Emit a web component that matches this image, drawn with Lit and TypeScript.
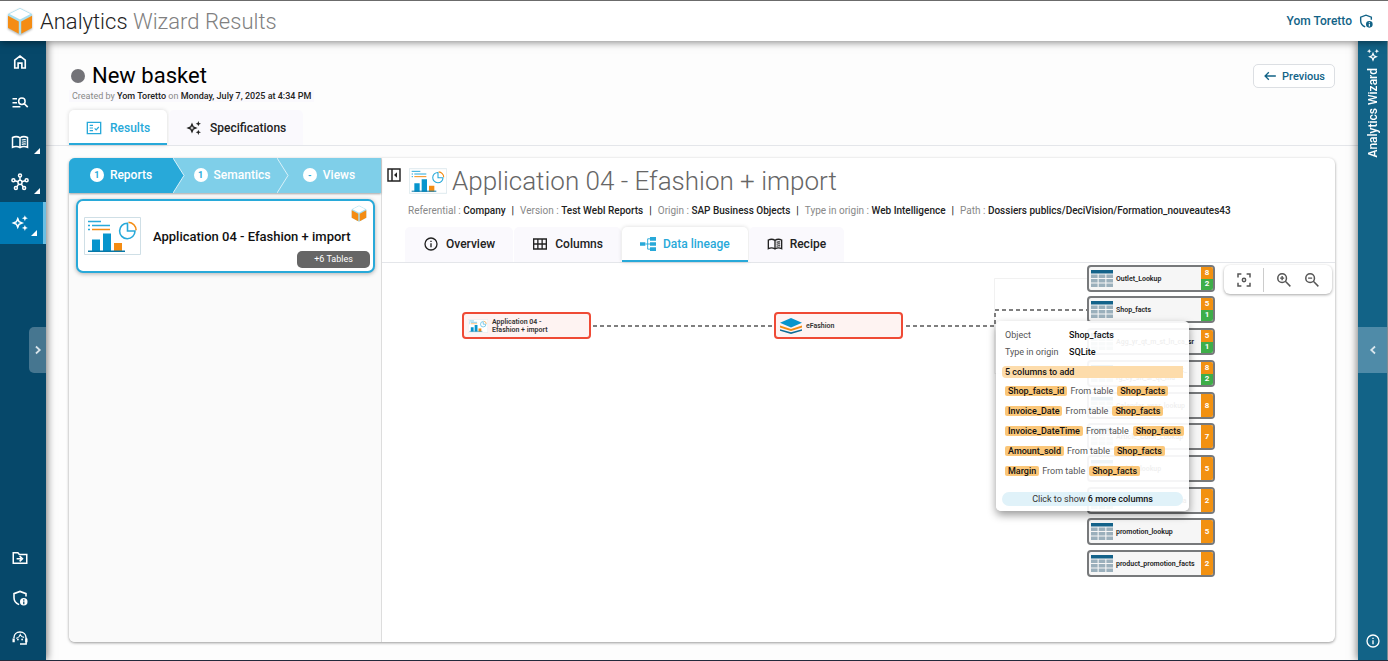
import { LitElement, html, svg, css, nothing } from "lit";
import { customElement, state } from "lit/decorators.js";
import { classMap } from "lit/directives/class-map.js";
import { styleMap } from "lit/directives/style-map.js";

const sparkle = svg`<path d="M9 6.2 10.7 10.3 14.8 12 10.7 13.7 9 17.8 7.3 13.7 3.2 12 7.3 10.3Z" fill="none" stroke="currentColor" stroke-width="2" stroke-linejoin="miter"/><path d="M18.5 1.5 19.6 4.4 22.5 5.5 19.6 6.6 18.5 9.5 17.4 6.6 14.5 5.5 17.4 4.4ZM18.5 14.5 19.6 17.4 22.5 18.5 19.6 19.6 18.5 22.5 17.4 19.6 14.5 18.5 17.4 17.4Z" fill="currentColor"/>`;
const book = svg`<path d="M12 6.5C9.5 4.8 5 4.6 2 6v13c3-1.300 7.500-1.100 10 .6 2.500-1.700 7-1.900 10-.6V6c-3-1.400-7.500-1.200-10 .5v13" fill="none" stroke="currentColor" stroke-width="2"/><path d="M14.300 9.400c1.900-.7 3.700-.8 5.500-.4M14.300 12.300c1.900-.7 3.700-.8 5.500-.4M14.300 15.200c1.900-.7 3.700-.8 5.500-.4" fill="none" stroke="currentColor" stroke-width="1.600"/>`;
const shield = svg`<path d="M20 10V6.200L12 3.200 4 6.200V11.500c0 4.300 2.800 7.600 6.800 9.300" fill="none" stroke="currentColor" stroke-width="2.100"/><path fill-rule="evenodd" d="M17 12a5 5 0 1 0 0 10 5 5 0 0 0 0-10Zm-.8 1.800h1.700v1.700h-1.700ZM16.200 16.500h1.700v3.700h-1.700Z" fill="currentColor"/>`;
const info = svg`<circle cx="12" cy="12" r="9" fill="none" stroke="currentColor" stroke-width="2"/><path d="M11 7h2v2h-2zM11 11h2v6h-2z" fill="currentColor"/>`;

const ICONS: Record<string, unknown> = {
  home: svg`<path d="M5 20V9.500L12 4.200l7 5.300V20h-4.500v-6.500h-5V20Z" fill="none" stroke="currentColor" stroke-width="2.200"/>`,
  search: svg`<path d="M2 7.800h6M2 13h6M2 18.200h10.500" stroke="currentColor" stroke-width="2"/><circle cx="14.500" cy="11" r="4.300" fill="none" stroke="currentColor" stroke-width="2"/><path d="m17.500 14 4.800 4.800" stroke="currentColor" stroke-width="2.200"/>`,
  book,
  hub: svg`<g fill="none" stroke="currentColor" stroke-width="2"><circle cx="12" cy="12.500" r="2.700"/><circle cx="12" cy="3.300" r="2"/><circle cx="3.200" cy="9.800" r="2"/><circle cx="20.800" cy="9.800" r="2"/><circle cx="6.500" cy="20" r="2"/><circle cx="17.500" cy="20" r="2"/><path d="M12 5.300v4.500M5.200 10.400l4.200 1.300M18.800 10.400l-4.200 1.300M7.700 18.300l2.600-3.500M16.300 18.300l-2.600-3.500"/></g>`,
  sparkle,
  folder: svg`<path d="M3 5h6.200l2 2.300H21V19H3Z" fill="none" stroke="currentColor" stroke-width="2"/><path d="M7.500 13h6M11.500 9.500l3.700 3.500-3.700 3.500" fill="none" stroke="currentColor" stroke-width="2.200"/>`,
  shield,
  agent: svg`<path d="M3.800 12.200C3.800 7.300 7.400 4 12 4s8.200 3.300 8.200 8.200V20H12" fill="none" stroke="currentColor" stroke-width="2"/><path d="M2 12.500h3v5H2zM19 12.500h3v5h-3z" fill="currentColor"/><path d="M7 12.500c3-.8 4.600-2.500 5.300-5 1 2.200 2.800 3.400 5.200 3.700" fill="none" stroke="currentColor" stroke-width="1.500"/><circle cx="9.200" cy="14" r="1.200" fill="currentColor"/><circle cx="14.800" cy="14" r="1.200" fill="currentColor"/>`,
  check: svg`<path d="M2 3.500h20v17H2Z" fill="none" stroke="currentColor" stroke-width="2"/><path d="M5.500 8.200h5M5.500 12h5M5.500 15.800h5M13 12.500l2.200 2.200 4-4.200" fill="none" stroke="currentColor" stroke-width="1.800"/>`,
  back: svg`<path d="M22 12H3.500M10 5.500 3.500 12l6.500 6.500" fill="none" stroke="currentColor" stroke-width="2.200"/>`,
  dock: svg`<path d="M3 3h18v18H3ZM9 3v18" fill="none" stroke="currentColor" stroke-width="2.200"/><path d="m16.500 8-4.500 4 4.500 4z" fill="currentColor"/>`,
  info,
  grid: svg`<path d="M2.500 4.500h19v15h-19ZM2.500 12h19M8.800 4.500v15M15.200 4.500v15" fill="none" stroke="currentColor" stroke-width="2"/>`,
  tree: svg`<path d="M0 9.500h8v5H0zM15 1.500h9v5.500h-9zM15 9.300h9v5.500h-9zM15 17h9v5.500h-9z" fill="currentColor"/><path d="M8 12h7M16 4.200h-4.500v15.500H16" fill="none" stroke="currentColor" stroke-width="1.400"/>`,
  focus: svg`<path d="M4 8.500V4h4.500M15.500 4H20v4.500M20 15.500V20h-4.500M8.500 20H4v-4.500" fill="none" stroke="currentColor" stroke-width="2"/><circle cx="12" cy="12" r="2.200" fill="none" stroke="currentColor" stroke-width="2"/>`,
  zoomin: svg`<circle cx="9.500" cy="9.500" r="5.800" fill="none" stroke="currentColor" stroke-width="2"/><path d="m13.800 13.800 6.700 6.700M9.500 6.800v5.400M6.800 9.500h5.400" stroke="currentColor" stroke-width="1.900"/>`,
  zoomout: svg`<circle cx="9.500" cy="9.500" r="5.800" fill="none" stroke="currentColor" stroke-width="2"/><path d="m13.800 13.800 6.700 6.700M6.800 9.500h5.400" stroke="currentColor" stroke-width="1.900"/>`,
  right: svg`<path d="m8.500 6 6.500 6-6.500 6" fill="none" stroke="currentColor" stroke-width="3"/>`,
  left: svg`<path d="m15.500 6-6.500 6 6.500 6" fill="none" stroke="currentColor" stroke-width="3"/>`,
};

const icon = (name: string, cls = "i16") =>
  html`<svg class="icon ${cls}" viewBox="0 0 24 24" aria-hidden="true">${ICONS[name]}</svg>`;

const cube = (cls: string) => html`<svg class=${cls} viewBox="0 0 26 28" aria-hidden="true">
  <path d="M13 1 25 7v14L13 27.500 1 21V7Z" fill="#a9dff0"/>
  <path d="M13 1.800 23.500 7 13 12.600 2.500 7Z" fill="#fff"/>
  <path d="M1 8.800 11.800 14.600V26.800L1 21ZM25 8.800 14.200 14.600V26.800L25 21Z" fill="#f48c13"/>
</svg>`;

const reportArt = (cls: string) => html`<svg class=${cls} viewBox="0 0 57 38" aria-hidden="true">
  <path d="M.5.500h56v37H.5Z" fill="#fff" stroke="#cfdfe6"/>
  <path d="M4 4.500h13M8 8.500h18" stroke="#28a9d9" stroke-width="1.500"/>
  <path d="M4 8.500h2M4 12.500h2" stroke="#28a9d9" stroke-width="1.500"/>
  <path d="M8 12.500h18" stroke="#f48c13" stroke-width="1.500"/>
  <path d="M8 22.500h8V35H8ZM19 16.500h8V35h-8Z" fill="#0795cd"/>
  <path d="M30 26h8v9h-8Z" fill="#f48c13"/>
  <path d="M4 34.300h37" stroke="#0878a8" stroke-width="1.500"/>
  <path d="M43.500 14h7.500a7.700 7.700 0 1 1-7.500-7.700Z" fill="none" stroke="#28a9d9" stroke-width="1.600"/>
  <path d="M44.500 5.300a8 8 0 0 1 7.600 8" fill="none" stroke="#f48c13" stroke-width="1.600"/>
</svg>`;

const tableArt = html`<svg class="table-art" viewBox="0 0 22 18" aria-hidden="true">
  <path d="M0 0h22v3.500H0Z" fill="#14638a"/>
  <path d="M0 4.500h6.600v3.500H0zM7.700 4.500h6.600v3.500H7.700zM15.400 4.500H22v3.500h-6.600zM0 9h6.600v3.500H0zM7.700 9h6.600v3.500H7.700zM15.400 9H22v3.500h-6.600zM0 13.500h6.600V17H0zM7.700 13.500h6.600V17H7.700zM15.400 13.500H22V17h-6.600z" fill="#9bb0bc"/>
</svg>`;

const layersArt = html`<svg class="layers-art" viewBox="0 0 22 16" aria-hidden="true">
  <path d="M0 11.300 11 14.300 22 11.300V12.700L11 16 0 12.700Z" fill="#0d6d98"/>
  <path d="M0 7.600 11 11l11-3.400v1.900L11 13 0 9.500Z" fill="#f48c13"/>
  <path d="M11 0 22 4.800 11 9.600 0 4.800Z" fill="#0795cd"/>
</svg>`;

interface TableNode { name: string; top: number; add: number; ok?: number }
const TABLES: TableNode[] = [
  { name: "Outlet_Lookup", top: 2, add: 8, ok: 2 },
  { name: "Shop_facts", top: 33, add: 5, ok: 1 },
  { name: "Agg_yr_qt_m_st_ln_ca_sr", top: 65, add: 5, ok: 1 },
  { name: "Agg_yr_qt_mt_mn_wk_\u200brg_cy_sn_sr_qt_ma", top: 97, add: 8, ok: 2 },
  { name: "Calendar_year_lookup", top: 129, add: 8 },
  { name: "Article_Color_Lookup", top: 160, add: 7 },
  { name: "Article_lookup", top: 192, add: 5 },
  { name: "Article_lookup_criteria", top: 224, add: 2 },
  { name: "promotion_lookup", top: 255, add: 5 },
  { name: "product_promotion_facts", top: 287, add: 2 },
];

const base = css`
  * { box-sizing: border-box; }
  button, a { font: inherit; color: inherit; text-decoration: none; }
  button { border: 0; background: none; padding: 0; margin: 0; cursor: pointer; }
  .icon { display: block; flex: none; }
  .i14 { width: 14px; height: 14px; }
  .i16 { width: 16px; height: 16px; }
  .i18 { width: 18px; height: 18px; }
`;

@customElement("side-nav")
class SideNav extends LitElement {
  static styles = [base, css`
    :host { display: flex; flex-direction: column; justify-content: space-between; padding: 1px 0 2px; position: relative; background: #06486a; color: #fff; box-shadow: 1px 0 8px rgba(0, 0, 0, .55); }
    nav { display: flex; flex-direction: column; }
    .item { display: flex; align-items: center; justify-content: center; height: 40px; padding-right: 6px; position: relative; }
    .sub::after { content: ""; position: absolute; right: 6px; bottom: 8px; border: 3px solid transparent; border-right-color: #fff; border-bottom-color: #fff; }
    .active { height: 42px; background: #0079b3; border-right: 3px solid #6bbfe4; padding-right: 3px; }
    .handle { position: absolute; right: 0; top: 286px; width: 17px; height: 46px; border-radius: 5px 0 0 5px; background: #467690; color: #d9e4ea; display: flex; align-items: center; justify-content: center; }
  `];
  render() {
    const top: [string, string, boolean][] = [["home", "Home", false], ["search", "Search", false], ["book", "Catalog", true], ["hub", "Network", true], ["sparkle", "Wizard", true]];
    const bottom: [string, string][] = [["folder", "Import"], ["shield", "Privacy"], ["agent", "Support"]];
    return html`
      <nav>${top.map(([n, l, sub], i) => html`<a href="#" aria-label=${l} class=${classMap({ item: true, sub, active: i === 4 })}>${icon(n, "i18")}</a>`)}</nav>
      <nav>${bottom.map(([n, l]) => html`<a href="#" aria-label=${l} class="item">${icon(n, "i18")}</a>`)}</nav>
      <button class="handle" aria-label="Expand menu">${icon("right", "i14")}</button>`;
  }
}

@customElement("wizard-rail")
class WizardRail extends LitElement {
  static styles = [base, css`
    :host { display: flex; flex-direction: column; align-items: center; justify-content: space-between; padding: 7px 0 11px; position: relative; background: #126387; color: #fff; box-shadow: -1px 0 8px rgba(0, 0, 0, .5); border-right: 1px solid #7f8b92; }
    .open { display: flex; flex-direction: column; align-items: center; gap: 6px; }
    .label { writing-mode: vertical-rl; transform: rotate(180deg); font-size: 12px; line-height: 14px; font-weight: 500; }
    .turn { transform: rotate(-90deg); }
    .handle { position: absolute; left: 0; right: 0; top: 286px; height: 46px; background: #4f8ba8; color: #d9e6ed; display: flex; align-items: center; justify-content: center; }
  `];
  render() {
    return html`
      <button class="open">${icon("sparkle", "i14 turn")}<span class="label">Analytics Wizard</span></button>
      <button class="handle" aria-label="Expand panel">${icon("left", "i14")}</button>
      <button aria-label="Information">${icon("info", "i16")}</button>`;
  }
}

@customElement("lineage-graph")
class LineageGraph extends LitElement {
  static styles = [base, css`
    :host { display: block; position: relative; flex: 1; min-height: 0; overflow: hidden; }
    .edges { position: absolute; left: 0; top: 0; width: 100%; height: 100%; }
    .node { position: absolute; display: flex; align-items: center; width: 129px; height: 27px; padding: 0 4px; gap: 4px; border: 2px solid #ef4a35; border-radius: 4px; background: #fef3f2; font-size: 7px; line-height: 8px; font-weight: 600; color: #333; }
    .node .text { width: 74px; text-align: left; }
    .table { left: 705px; width: 128px; padding: 0 0 0 2px; border-color: #77797b; background: #f6f6f6; overflow: hidden; gap: 3px; }
    .table .text { flex: 1; width: auto; min-width: 0; color: #222; }
    .counts { align-self: stretch; width: 12px; display: flex; flex-direction: column; color: #fff; font-size: 8px; font-weight: 700; }
    .add, .ok { flex: 1; display: grid; place-items: center; background: #f29111; }
    .ok { background: #3eae49; }
    .mini { width: 20px; height: 14px; flex: none; }
    .table-art { width: 22px; height: 18px; flex: none; }
    .layers-art { width: 22px; height: 16px; flex: none; }
    .tools { position: absolute; right: 3px; top: 2px; height: 29px; width: 108px; display: flex; align-items: center; justify-content: space-between; padding: 0 11px; border-radius: 6px; background: #fff; color: #555; box-shadow: 0 1px 3px rgba(0, 0, 0, .35); }
    .rule { width: 1px; height: 24px; background: #ccc; }
    .tip { position: absolute; left: 614px; top: 58px; width: 193px; padding: 7px 6px 5px; border-radius: 5px; background: rgba(255, 255, 255, .93); box-shadow: 0 4px 8px rgba(0, 0, 0, .4); font-size: 9px; line-height: 14px; color: #555; }
    dl { margin: 0 0 7px; padding: 0 3px; display: grid; grid-template-columns: 64px 1fr; row-gap: 3px; line-height: 14px; }
    dd { margin: 0; font-weight: 500; color: #111; }
    .head { padding: 0 3px; height: 12px; line-height: 12px; border-radius: 4px 0 0 4px; background: #fddcab; color: #111; font-weight: 500; }
    ul { list-style: none; margin: 7px 0 15px; padding: 0 3px; display: flex; flex-direction: column; gap: 8px; }
    li { display: flex; gap: 3px; line-height: 12px; white-space: nowrap; }
    .tag { height: 10px; margin-top: 1px; line-height: 10px; padding: 0 3px; border-radius: 2px; background: #fbc779; color: #111; font-weight: 500; }
    .src { padding-right: 1px; }
    .more { display: block; width: 100%; height: 14px; border-radius: 7px; background: #e0f2f9; color: #333; text-align: center; }
    .more b { font-weight: 500; color: #111; }
  `];
  render() {
    const cols = ["Shop_facts_id", "Invoice_Date", "Invoice_DateTime", "Amount_sold", "Margin"];
    return html`
      <svg class="edges" aria-hidden="true">
        <path d="M612.500 94V15.500H705M612.500 63V110.500H705" fill="none" stroke="#f1f1f1"/>
        <path d="M211 63H393M524 63H613V47H705" fill="none" stroke="#555" stroke-width="1.500" stroke-dasharray="4 3"/>
      </svg>
      <button class="node" style=${styleMap({ left: "80px", top: "49px" })}>${reportArt("mini")}<span class="text">Application 04 - Efashion + import</span></button>
      <button class="node" style=${styleMap({ left: "392px", top: "49px" })}>${layersArt}<span class="text">eFashion</span></button>
      ${TABLES.map((t) => html`<div class="node table" style=${styleMap({ top: t.top + "px" })}>${tableArt}<span class="text">${t.name}</span><span class="counts"><span class="add">${t.add}</span>${t.ok ? html`<span class="ok">${t.ok}</span>` : nothing}</span></div>`)}
      <div class="tools">
        <button aria-label="Fit to screen">${icon("focus", "i18")}</button><span class="rule"></span>
        <button aria-label="Zoom in">${icon("zoomin", "i18")}</button><button aria-label="Zoom out">${icon("zoomout", "i18")}</button>
      </div>
      <div class="tip">
        <dl><dt>Object</dt><dd>Shop_facts</dd><dt>Type in origin</dt><dd>SQLite</dd></dl>
        <div class="head">5 columns to add</div>
        <ul>${cols.map((c) => html`<li><span class="tag">${c}</span><span class="src">From table</span><span class="tag">Shop_facts</span></li>`)}</ul>
        <button class="more">Click to show <b>6 more columns</b></button>
      </div>`;
  }
}

@customElement("app-root")
class AppRoot extends LitElement {
  @state() tab = "Data lineage";
  static styles = [base, css`
    :host { display: flex; flex-direction: column; height: 100vh; overflow: hidden; font-family: Roboto, "Liberation Sans", sans-serif; font-size: 12px; color: #222; background: #fff; border-top: 1px solid #6b6b6b; border-bottom: 1px solid #222a3c; box-sizing: border-box; }
    header { display: flex; align-items: center; height: 40px; flex: none; padding: 0 14px 0 7px; gap: 7px; background: #fff; position: relative; z-index: 2; box-shadow: 0 1px 8px rgba(0, 0, 0, .5); }
    .logo { width: 26px; height: 28px; flex: none; filter: drop-shadow(0 1px 1px rgba(0, 0, 0, .3)); }
    .brand { flex: 1; font-size: 22px; font-weight: 300; color: #222; }
    .brand span { color: #808080; }
    .user { display: flex; align-items: center; gap: 6px; color: #126387; font-weight: 500; }
    .body { flex: 1; min-height: 0; display: grid; grid-template-columns: 46px 1fr 30px; }
    main { display: flex; flex-direction: column; min-width: 0; min-height: 0; background: #fdfdfd; }
    .top { display: flex; justify-content: space-between; align-items: flex-start; padding: 22px 23px 0; }
    .title { display: flex; align-items: center; gap: 7px; margin: 0; padding-left: 2px; font-size: 22px; line-height: 26px; font-weight: 400; color: #000; }
    .dot { width: 14px; height: 14px; border-radius: 50%; background: #737378; }
    .created { margin: 1px 0 0; padding: 0 3px; font-size: 9px; line-height: 12px; color: #888; background: #faf9fd; }
    .created b { font-weight: 500; color: #222; }
    .prev { display: flex; align-items: center; justify-content: center; gap: 5px; height: 24px; margin-top: 1px; padding: 0 9px; border: 1px solid #dcdfe3; border-radius: 5px; background: #fff; color: #126387; font-size: 11px; font-weight: 500; }
    .tabs { display: flex; border-bottom: 1px solid #e4e6ea; }
    .outer { gap: 2px; padding-left: 23px; margin-top: 8px; height: 36px; }
    .tab { display: flex; align-items: center; justify-content: center; gap: 7px; height: 35px; border-radius: 5px 5px 0 0; background: #faf9fd; font-weight: 500; color: #222; padding: 0 18px; border-bottom: 2px solid transparent; }
    .outer .tab { gap: 8px; padding: 2px 17px 0; }
    .tab.on { background: #fff; color: #28a9d9; border-bottom-color: #28a9d9; box-shadow: 0 0 4px rgba(0, 0, 0, .15); }
    .panel { flex: 1; min-height: 0; margin: 12px 23px 18px; display: grid; grid-template-columns: 313px 1fr; background: #fff; border-radius: 6px; box-shadow: 0 1px 3px rgba(0, 0, 0, .4); overflow: hidden; }
    .list { display: flex; flex-direction: column; background: #fafafa; border-right: 1px solid #ddd; }
    .steps { display: grid; grid-template-columns: repeat(3, 1fr); height: 35px; background: #7fcfe9; color: #fff; font-weight: 500; box-shadow: 0 1px 2px rgba(0, 0, 0, .35); }
    .step { position: relative; display: flex; align-items: center; justify-content: center; gap: 6px; padding-bottom: 2px; }
    .middle { padding-left: 14px; }
    .current { background: #28a9d9; }
    .arrow { position: absolute; left: 100%; top: 0; z-index: 1; width: 12px; height: 35px; }
    .num { width: 14px; height: 14px; border-radius: 50%; background: #fff; color: #28a9d9; display: grid; place-items: center; font-size: 9px; line-height: 14px; font-weight: 700; }
    .card { position: relative; display: flex; align-items: center; gap: 12px; height: 74px; margin: 6px 6px 6px 7px; padding: 0 6px; border: 2px solid #28a9d9; border-radius: 7px; background: #fff; box-shadow: 0 1px 4px rgba(0, 0, 0, .3); font-size: 13px; font-weight: 500; color: #111; text-align: left; }
    .art { width: 57px; height: 38px; flex: none; }
    .mark { position: absolute; right: 6px; top: 4px; width: 16px; height: 17px; }
    .badge { position: absolute; right: 3px; bottom: 3px; width: 73px; height: 17px; border-radius: 5px; background: #666; color: #fff; font-size: 9px; line-height: 17px; text-align: center; font-weight: 400; }
    .detail { display: flex; flex-direction: column; min-width: 0; min-height: 0; }
    .heading { display: flex; align-items: flex-start; padding: 8px 4px 0; gap: 7px; }
    .toggle { margin-top: 1px; }
    .name { display: flex; align-items: center; gap: 5px; margin: 0; font-size: 26px; line-height: 30px; font-weight: 300; color: #666; }
    .art-m { width: 38px; height: 26px; }
    .facts { display: flex; gap: 6px; margin: 9px 0 0; padding-left: 26px; font-size: 10px; line-height: 12px; color: #888; white-space: nowrap; }
    .facts b { font-weight: 500; color: #222; }
    .bar { color: #444; }
    .inner { gap: 1px; margin-top: 10px; padding-left: 23px; }
  `];
  render() {
    const facts = [["Referential", "Company"], ["Version", "Test WebI Reports"], ["Origin", "SAP Business Objects"], ["Type in origin", "Web Intelligence"], ["Path", "Dossiers publics/DeciVision/Formation_nouveautes43"]];
    const tabs = [["info", "Overview"], ["grid", "Columns"], ["tree", "Data lineage"], ["book", "Recipe"]];
    const arrow = (fill: string) => html`<svg class="arrow" viewBox="0 0 12 35" aria-hidden="true"><path d="M0 0 11 17.500 0 35Z" fill=${fill}/><path d="M0 0 11 17.500 0 35" fill="none" stroke="#d9f1f9"/></svg>`;
    return html`
      <header>
        ${cube("logo")}
        <div class="brand">Analytics <span>Wizard Results</span></div>
        <a class="user" href="#">Yom Toretto ${icon("shield")}</a>
      </header>
      <div class="body">
        <side-nav></side-nav>
        <main>
          <div class="top">
            <div>
              <h1 class="title"><span class="dot"></span>New basket</h1>
              <p class="created">Created by <b>Yom Toretto</b> on <b>Monday, July 7, 2025 at 4:34 PM</b></p>
            </div>
            <button class="prev">${icon("back", "i14")}Previous</button>
          </div>
          <div class="tabs outer" role="tablist">
            <button class="tab on" role="tab" aria-selected="true">${icon("check")}Results</button>
            <button class="tab" role="tab" aria-selected="false">${icon("sparkle")}Specifications</button>
          </div>
          <section class="panel">
            <div class="list">
              <div class="steps">
                <button class="step current"><span class="num">1</span>Reports${arrow("#28a9d9")}</button>
                <button class="step middle"><span class="num">1</span>Semantics${arrow("#7fcfe9")}</button>
                <button class="step"><span class="num">-</span>Views</button>
              </div>
              <button class="card">${reportArt("art")}<span>Application 04 - Efashion + import</span>${cube("mark")}<span class="badge">+6 Tables</span></button>
            </div>
            <div class="detail">
              <div class="heading">
                <button class="toggle" aria-label="Collapse list">${icon("dock")}</button>
                <h2 class="name">${reportArt("art-m")}Application 04 - Efashion + import</h2>
              </div>
              <div class="facts">${facts.map(([k, v], i) => html`${i ? html`<b class="bar">|</b>` : nothing}<span>${k} : <b>${v}</b></span>`)}</div>
              <div class="tabs inner" role="tablist">
                ${tabs.map(([n, l]) => html`<button role="tab" aria-selected=${this.tab === l} class=${classMap({ tab: true, on: this.tab === l })} @click=${() => (this.tab = l)}>${icon(n)}${l}</button>`)}
              </div>
              <lineage-graph></lineage-graph>
            </div>
          </section>
        </main>
        <wizard-rail></wizard-rail>
      </div>`;
  }
}
